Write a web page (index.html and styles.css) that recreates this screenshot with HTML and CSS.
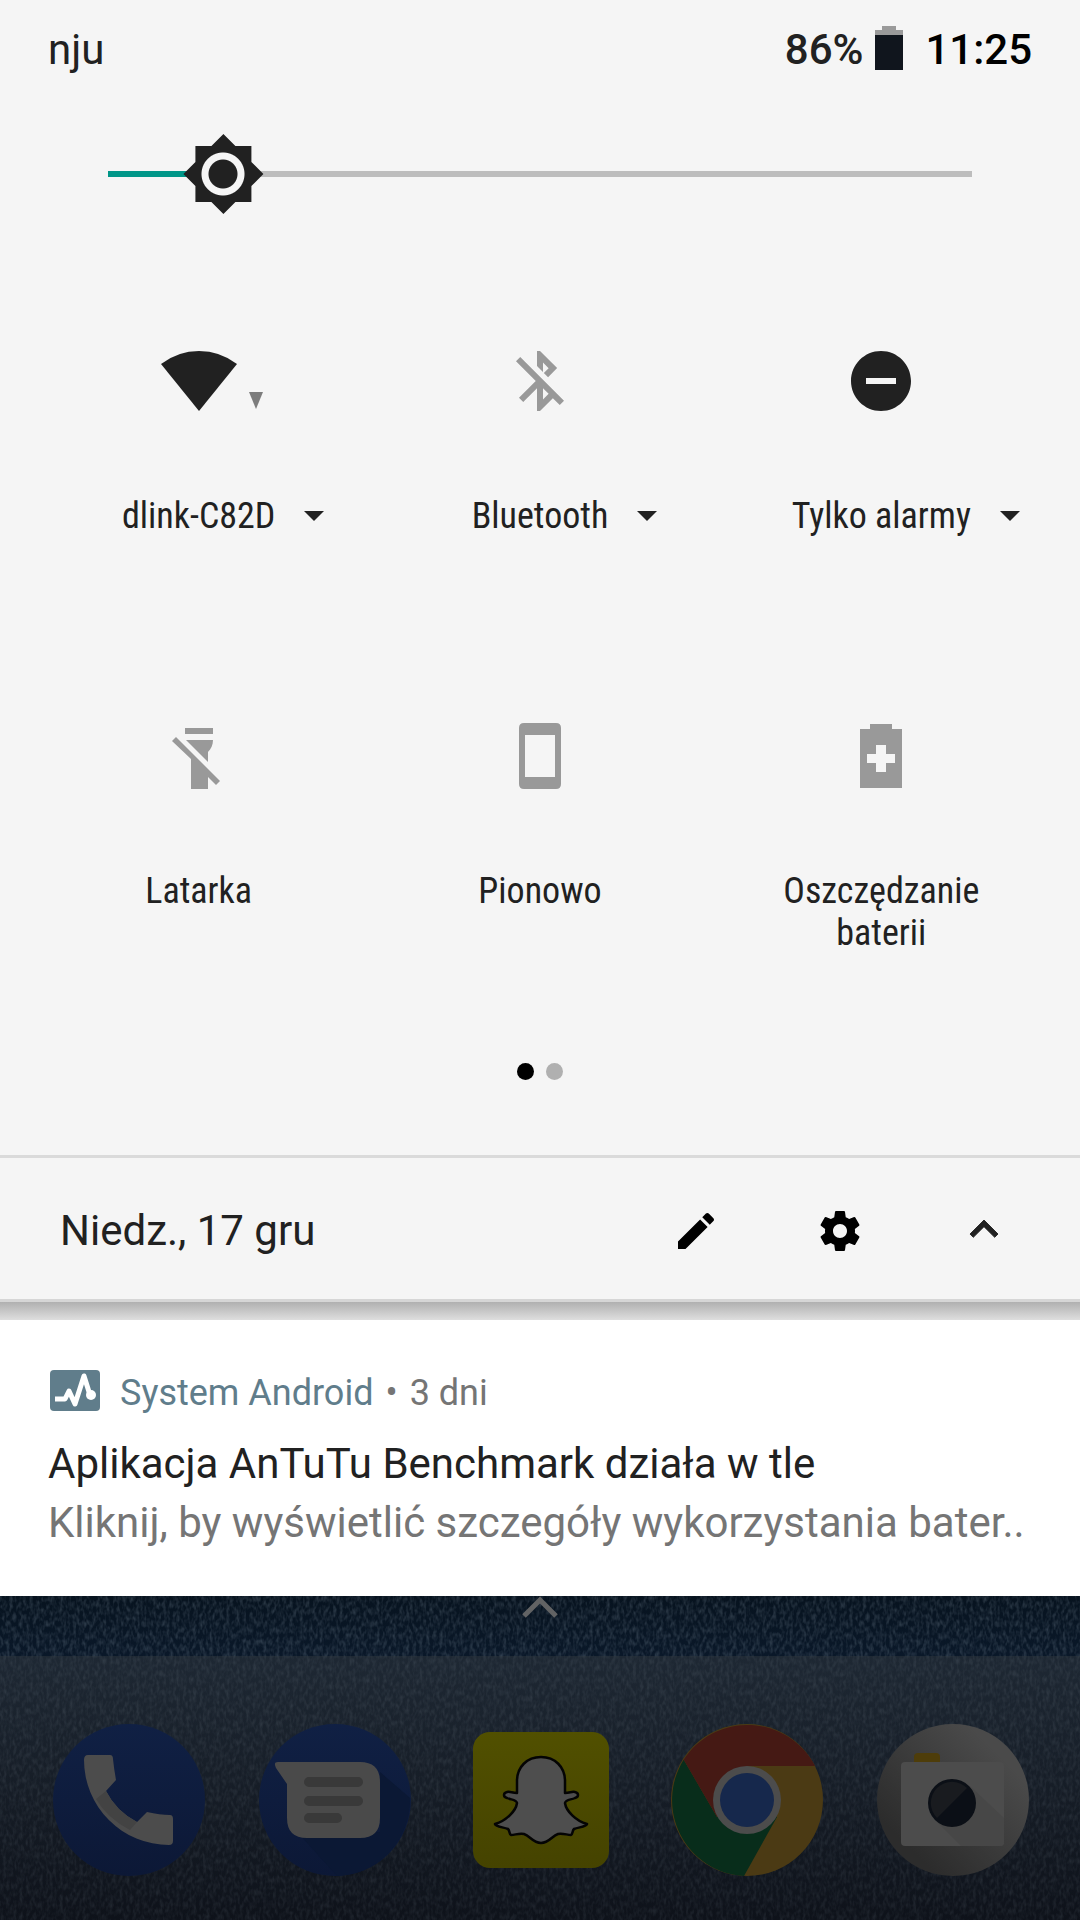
FILE: index.html
```
<!DOCTYPE html>
<html lang="pl">
<head>
    <meta charset="UTF-8">
    <meta name="viewport" content="width=device-width, initial-scale=1">
    <title>Szybkie ustawienia</title>
    <link rel="stylesheet" href="styles.css">
</head>
<body>
    <section class="panel">
        <header class="status-bar">
            <span class="carrier">nju</span>
            <span class="battery-level">86%</span>
            <svg class="battery-icon" viewBox="0 0 28 44">
                <path fill="#9a9a9a" d="M7 0h14v4h7v6H0V4h7z"/>
                <path fill="#10151d" d="M0 9h28v35H0z"/>
            </svg>
            <time class="clock">11:25</time>
        </header>

        <div class="brightness">
            <input type="range" class="brightness-slider" min="0" max="255" value="24" aria-label="Jasność">
        </div>

        <div class="tiles">
            <button class="tile">
                <svg class="tile-icon wide" viewBox="0 0 130 72">
                    <path fill="#212121" d="M65 66L27 19Q44 6 65 6t38 13z"/>
                    <path fill="#7c7c7c" d="M115 47h14l-7 17z"/>
                </svg>
                <span class="tile-label has-menu"><span class="name">dlink-C82D</span><span class="caret"></span></span>
            </button>
            <button class="tile">
                <svg class="tile-icon off" viewBox="0 0 24 24">
                    <path d="M13 5.83l1.88 1.88-1.6 1.6 1.41 1.41 3.02-3.02L12 2h-1v5.03l2 2v-3.2zM5.41 4L4 5.41 10.59 12 5 17.59 6.41 19 11 14.41V22h1l4.29-4.29 2.3 2.29L20 18.59 5.41 4zM13 18.17v-3.76l1.88 1.88L13 18.17z"/>
                </svg>
                <span class="tile-label has-menu"><span class="name">Bluetooth</span><span class="caret"></span></span>
            </button>
            <button class="tile">
                <svg class="tile-icon" viewBox="0 0 24 24">
                    <path d="M12 2C6.48 2 2 6.48 2 12s4.48 10 10 10 10-4.48 10-10S17.52 2 12 2zm5 11H7v-2h10v2z"/>
                </svg>
                <span class="tile-label has-menu"><span class="name">Tylko alarmy</span><span class="caret"></span></span>
            </button>
            <button class="tile">
                <svg class="tile-icon off" viewBox="0 0 72 72">
                    <path d="M22 8h28v6H22zM23 20h27c0 5-2 9-5 12v10zM13 17l44 44-4 4-8-8v12H28V39L9 21z"/>
                </svg>
                <span class="tile-label">Latarka</span>
            </button>
            <button class="tile">
                <svg class="tile-icon off" viewBox="0 0 72 72">
                    <path fill-rule="evenodd" d="M20 3h32q5 0 5 5v56q0 5-5 5H20q-5 0-5-5V8q0-5 5-5zM21 15v42h30V15z"/>
                </svg>
                <span class="tile-label">Pionowo</span>
            </button>
            <button class="tile">
                <svg class="tile-icon off" viewBox="0 0 72 72">
                    <path fill-rule="evenodd" d="M25 4h22v5h10v59H15V9h10zM31 25v9h-9v9h9v9h10v-9h9v-9h-9v-9z"/>
                </svg>
                <span class="tile-label">Oszczędzanie baterii</span>
            </button>
        </div>

        <div class="pages">
            <span class="dot active"></span>
            <span class="dot"></span>
        </div>

        <footer class="panel-footer">
            <span class="date">Niedz., 17 gru</span>
            <button class="footer-button" aria-label="Edytuj">
                <svg width="48" height="48" viewBox="0 0 24 24">
                    <path d="M3 17.25V21h3.75L17.81 9.94l-3.75-3.75L3 17.25zM20.71 7.04c.39-.39.39-1.02 0-1.41l-2.34-2.34c-.39-.39-1.02-.39-1.41 0l-1.83 1.83 3.75 3.75 1.83-1.83z"/>
                </svg>
            </button>
            <button class="footer-button" aria-label="Ustawienia">
                <svg width="48" height="48" viewBox="0 0 24 24">
                    <path d="M19.43 12.98c.04-.32.07-.64.07-.98s-.03-.66-.07-.98l2.11-1.65c.19-.15.24-.42.12-.64l-2-3.46c-.12-.22-.39-.3-.61-.22l-2.49 1c-.52-.4-1.08-.73-1.69-.98l-.38-2.65C14.46 2.18 14.25 2 14 2h-4c-.25 0-.46.18-.49.42l-.38 2.65c-.61.25-1.17.59-1.69.98l-2.49-1c-.23-.09-.49 0-.61.22l-2 3.46c-.13.22-.07.49.12.64l2.11 1.65c-.04.32-.07.65-.07.98s.03.66.07.98l-2.11 1.65c-.19.15-.24.42-.12.64l2 3.46c.12.22.39.3.61.22l2.49-1c.52.4 1.08.73 1.69.98l.38 2.65c.03.24.24.42.49.42h4c.25 0 .46-.18.49-.42l.38-2.65c.61-.25 1.17-.59 1.69-.98l2.49 1c.23.09.49 0 .61-.22l2-3.46c.12-.22.07-.49-.12-.64l-2.11-1.65zM12 15.5c-1.93 0-3.5-1.57-3.5-3.5s1.57-3.5 3.5-3.5 3.5 1.57 3.5 3.5-1.57 3.5-3.5 3.5z"/>
                </svg>
            </button>
            <button class="footer-button" aria-label="Zwiń">
                <svg width="56" height="56" viewBox="0 0 24 24">
                    <path fill="#212121" stroke="#212121" stroke-width=".4" d="M12 7.3l-6 6 1.41 1.41L12 10.13l4.59 4.58L18 13.3z"/>
                </svg>
            </button>
        </footer>
    </section>

    <div class="panel-shadow"></div>

    <article class="notification">
        <div class="notification-header">
            <svg class="notification-icon" viewBox="0 0 50 48">
                <rect y="1" width="50" height="41" rx="4" fill="#607d8b"/>
                <path fill="none" stroke="#fff" stroke-width="5" stroke-linejoin="round" d="M5 30h10l4-8 6 13 9-28 6 19"/>
                <circle cx="41" cy="26" r="5" fill="#fff"/>
            </svg>
            <span class="app-name">System Android</span>
            <span class="age">•</span>
            <span class="age">3 dni</span>
        </div>
        <div class="notification-title">Aplikacja AnTuTu Benchmark działa w tle</div>
        <div class="notification-text">Kliknij, by wyświetlić szczegóły wykorzystania bater..</div>
    </article>

    <main class="home">
        <svg class="fabric">
            <filter id="denim" x="0" y="0" width="100%" height="100%">
                <feTurbulence type="fractalNoise" baseFrequency="0.3 0.16" numOctaves="2" seed="4"/>
                <feColorMatrix values="0 0 0 0 .3  0 0 0 0 .38  0 0 0 0 .46  1.3 0 0 0 -.5"/>
            </filter>
            <rect width="100%" height="100%" filter="url(#denim)"/>
        </svg>
        <div class="drawer-handle">
            <svg width="36" height="24" viewBox="0 0 36 24">
                <path fill="none" stroke="#626364" stroke-width="5" d="M2 20L18 4l16 16"/>
            </svg>
        </div>
        <nav class="dock">
            <a href="#" class="app" aria-label="Telefon">
                <svg width="152" height="152" viewBox="0 0 152 152">
                    <circle cx="76" cy="76" r="76" fill="url(#blue)"/>
                    <path fill="#4c4c4c" d="M35 31h22q3 0 3 4 1 10 3 21L53 67q10 20 31 31l10-10q13 3 23 3 3 0 3 4v22q0 4-4 4A85 85 0 0 1 31 36q0-5 4-5z"/>
                    <path fill="#434343" d="M53 67q10 20 31 31l-7 8Q54 94 43 75z"/>
                </svg>
            </a>
            <a href="#" class="app" aria-label="Wiadomości">
                <svg width="152" height="152" viewBox="0 0 152 152">
                    <circle cx="76" cy="76" r="76" fill="url(#blue)"/>
                    <path fill="#0b1834" d="M40 110L78 152A76 76 0 0 0 151 74L121 48v60z"/>
                    <path fill="#4a4a4a" d="M19 38h82q20 0 20 20v36q0 20-20 20H48q-20 0-20-20V60L17 44q-3-6 2-6z"/>
                    <path fill="none" stroke="#393939" stroke-width="10" stroke-linecap="round" d="M50 58h49M50 77h49M50 94h28"/>
                </svg>
            </a>
            <a href="#" class="app" aria-label="Snapchat">
                <svg width="136" height="136" viewBox="0 0 136 136">
                    <rect width="136" height="136" rx="17" fill="url(#yellow)"/>
                    <path fill="#4e4e4e" stroke="#040404" stroke-width="2.5" stroke-linejoin="round" d="M68 25C54 25 44 35 44 49V61C39 61 37 59 34 60C30 61 30 65 34 66C38 68 43 67 44 71C43 79 33 89 22 92C23 95 30 95 35 97C37 99 36 102 38 103C42 103 46 101 51 102C57 104 60 111 68 111C76 111 79 104 85 102C90 101 94 103 98 103C100 102 99 99 101 97C106 95 113 95 114 92C103 89 93 79 92 71C93 67 98 68 102 66C106 65 106 61 102 60C99 59 97 61 92 61V49C92 35 82 25 68 25z"/>
                </svg>
            </a>
            <a href="#" class="app" aria-label="Chrome">
                <svg width="152" height="152" viewBox="0 0 152 152">
                    <circle cx="76" cy="76" r="76" fill="#4b3a14"/>
                    <path fill="#082d1b" d="M12.7 35.7L46 93l30-17 30 17-33 59A76 76 0 0 1 12.7 35.7z"/>
                    <path fill="#451914" d="M12.7 35.7A76 76 0 0 1 144 42H76v34L46 93z"/>
                    <circle cx="76" cy="76" r="34" fill="#4c4c4c"/>
                    <circle cx="76" cy="76" r="27" fill="#16284c"/>
                </svg>
            </a>
            <a href="#" class="app" aria-label="Aparat">
                <svg width="152" height="152" viewBox="0 0 152 152">
                    <circle cx="76" cy="76" r="76" fill="url(#grey)"/>
                    <path fill="#4e3d0a" d="M41 29h18q4 0 4 4v6H37v-6q0-4 4-4z"/>
                    <rect x="24" y="38" width="103" height="84" rx="4" fill="#4c4c4c"/>
                    <path fill="#474747" d="M93 62l34 32v24q0 4-4 4H84L58 96z"/>
                    <circle cx="75" cy="79" r="24" fill="#0b0f16"/>
                    <path fill="#191b1f" d="M60 94A21 21 0 0 1 90 64z"/>
                </svg>
            </a>
        </nav>
    </main>

    <!-- shared gradients of the dock icons -->
    <svg class="defs">
        <linearGradient id="blue" x1="0" y1="0" x2="0" y2="1">
            <stop offset="0" stop-color="#102044"/>
            <stop offset="1" stop-color="#0c1836"/>
        </linearGradient>
        <linearGradient id="yellow" x1="0" y1="0" x2="0" y2="1">
            <stop offset="0" stop-color="#515000"/>
            <stop offset="1" stop-color="#454300"/>
        </linearGradient>
        <linearGradient id="grey" x1="1" y1="0" x2="0" y2="1">
            <stop offset=".2" stop-color="#4a4a4a"/>
            <stop offset=".8" stop-color="#2c2c2c"/>
        </linearGradient>
    </svg>
</body>
</html>
```

FILE: styles.css
```
* {
    box-sizing: border-box;
}

body {
    display: flex;
    flex-direction: column;
    min-height: 100vh;
    margin: 0;
    background-color: #10151d;
    color: #212121;
    font-family: Roboto, sans-serif;
    font-size: 42px;
    line-height: 48px;
}

button {
    padding: 0;
    border: none;
    background: none;
    color: inherit;
    font: inherit;
    cursor: pointer;
}

svg {
    display: block;
    flex-shrink: 0;
}

.panel {
    background-color: #f5f5f5;
    border-bottom: 3px solid #d6d6d6;
}

.status-bar {
    display: flex;
    align-items: flex-start;
    padding: 26px 48px 0;
}

.carrier {
    flex: 1;
}

.battery-level {
    font-weight: 500;
}

.battery-icon {
    width: 28px;
    height: 44px;
    margin: 0 22px 0 12px;
}

.clock {
    color: #000;
    font-weight: 500;
}

/* Brightness */
.brightness {
    padding: 58px 10% 0;
}

.brightness-slider {
    -webkit-appearance: none;
    appearance: none;
    display: block;
    width: 100%;
    height: 84px;
    margin: 0;
    background: linear-gradient(to right, #009688 13%, #bdbdbd 13%) center / 100% 6px no-repeat;
}

.brightness-slider::-webkit-slider-thumb {
    -webkit-appearance: none;
    width: 84px;
    height: 84px;
    background: radial-gradient(circle, #212121 14px, #f5f5f5 15px, #f5f5f5 21px, #212121 22px);
    clip-path: polygon(42px 2px, 54px 14px, 70px 14px, 70px 30px, 82px 42px, 70px 54px, 70px 70px, 54px 70px, 42px 82px, 30px 70px, 14px 70px, 14px 54px, 2px 42px, 14px 30px, 14px 14px, 30px 14px);
}

/* Tiles */
.tiles {
    display: grid;
    grid-template-columns: repeat(3, 1fr);
    row-gap: 183px;
    padding: 129px 28px 0;
}

.tile {
    display: flex;
    flex-direction: column;
    align-items: center;
    gap: 78px;
    font-family: "Roboto Condensed", Roboto, sans-serif;
    font-size: 36px;
    line-height: 42px;
}

.tile-icon {
    width: 72px;
    height: 72px;
    fill: #212121;
}

.tile-icon.wide {
    width: 130px;
}

.tile-icon.off {
    fill: #999;
}

.tile-label {
    width: 100%;
    padding: 0 60px;
}

.tile-label.has-menu {
    display: grid;
    grid-template-columns: 1fr auto 1fr;
    align-items: center;
    padding: 0;
}

.name {
    grid-column: 2;
}

.caret {
    width: 0;
    margin-left: 29px;
    border: 10px solid transparent;
    border-top-color: #212121;
    border-bottom: none;
}

.pages {
    display: flex;
    justify-content: center;
    gap: 12px;
    padding: 109px 0 75px;
}

.dot {
    width: 17px;
    height: 17px;
    border-radius: 50%;
    background-color: #b0b0b0;
}

.dot.active {
    background-color: #000;
}

.panel-footer {
    display: flex;
    align-items: center;
    height: 144px;
    padding: 4px 24px 0 60px;
    border-top: 3px solid #dadada;
}

.date {
    flex: 1;
}

.footer-button {
    display: flex;
    align-items: center;
    justify-content: center;
    width: 144px;
    height: 96px;
}

.panel-shadow {
    height: 18px;
    background: linear-gradient(#b0b0b0, #dedede);
}

/* Notification */
.notification {
    padding: 49px 48px 44px;
    background-color: #fff;
}

.notification-header {
    display: flex;
    align-items: center;
    gap: 12px;
    margin-bottom: 17px;
    color: #757575;
    font-size: 36px;
    line-height: 42px;
}

.notification-icon {
    width: 50px;
    height: 48px;
    margin: 0 8px 0 2px;
}

.app-name {
    color: #607d8b;
}

.notification-title,
.notification-text {
    line-height: 59px;
    white-space: nowrap;
}

.notification-text {
    color: #757575;
}

/* Home screen under the shade */
.home {
    position: relative;
    flex: 1;
    background: linear-gradient(#07131f, #0a1829 60px, #0c121c);
}

.fabric {
    position: absolute;
    width: 100%;
    height: 100%;
    opacity: 0.4;
}

.drawer-handle {
    position: relative;
    display: flex;
    justify-content: center;
    height: 60px;
}

.dock {
    position: relative;
    display: grid;
    grid-template-columns: repeat(5, 1fr);
    align-items: center;
    padding: 68px 24px 44px 26px;
    background: linear-gradient(rgba(50, 56, 62, 0.5), rgba(16, 18, 24, 0.5));
}

.app {
    display: flex;
    justify-content: center;
}

.defs {
    position: absolute;
    width: 0;
    height: 0;
}
```
